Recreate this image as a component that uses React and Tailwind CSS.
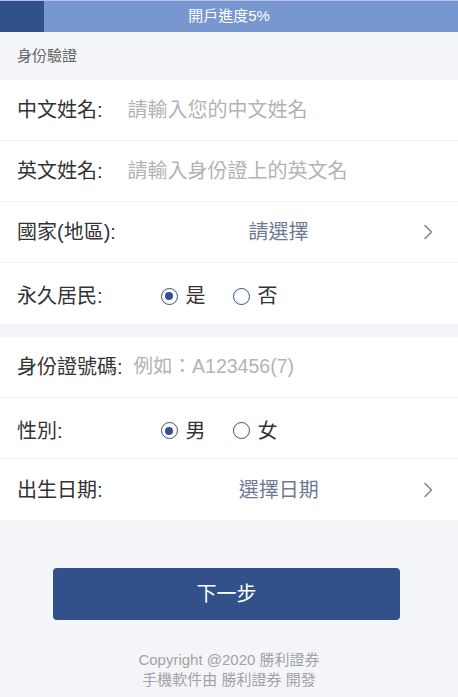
import React, { useState } from "react";

const font = {
  fontFamily: '"Liberation Sans", "Noto Sans CJK TC", "Noto Sans", sans-serif',
};

function Chevron() {
  return (
    <svg width="10" height="16" viewBox="0 0 10 16" fill="none">
      <path d="M2 1.5L8.5 8L2 14.5" stroke="#7a8499" strokeWidth="1.5" strokeLinecap="round" strokeLinejoin="round" />
    </svg>
  );
}

function Radio({ checked, label, onClick }) {
  return (
    <button onClick={onClick} className="flex items-center gap-[8px]">
      <span className="w-[17px] h-[17px] rounded-full border-[1.5px] border-[#32508a] flex items-center justify-center">
        {checked && <span className="w-[8px] h-[8px] rounded-full bg-[#32508a]" />}
      </span>
      <span className="text-[20px] text-[#333]">{label}</span>
    </button>
  );
}

function Row({ label, children, last, low }) {
  return (
    <div
      className={
        "h-[61px] flex items-center pl-[17px] pr-[25px] bg-white" +
        (last ? "" : " border-b border-[#eef0f4]") +
        (low ? " pt-[5px]" : "")
      }
    >
      <span className="text-[20px] text-[#333] shrink-0">{label}</span>
      {children}
    </div>
  );
}

export default function App() {
  const [resident, setResident] = useState("yes");
  const [gender, setGender] = useState("m");

  return (
    <div className="bg-[#f4f5f9] min-h-[697px] w-[458px]" style={font}>
      {/* progress */}
      <div className="relative h-[32px] bg-[#7896cf] border-t border-[#b3c3e3] flex items-center justify-center">
        <div className="absolute left-0 top-0 bottom-0 w-[44px] bg-[#32508a]" />
        <span className="relative text-white text-[15px]">開戶進度5%</span>
      </div>

      <div className="h-[48px] flex items-center pl-[17px] text-[15px] text-[#666]">身份驗證</div>

      <div>
        <Row label="中文姓名:">
          <span className="ml-[25px] text-[20px] text-[#b3b3b3]">請輸入您的中文姓名</span>
        </Row>
        <Row label="英文姓名:">
          <span className="ml-[25px] text-[20px] text-[#b3b3b3]">請輸入身份證上的英文名</span>
        </Row>
        <Row label="國家(地區):">
          <span className="flex-1 text-center text-[20px] text-[#6e7a94] pl-[18px]">請選擇</span>
          <Chevron />
        </Row>
        <Row label="永久居民:" last low>
          <div className="ml-[58px] flex items-center gap-[27px]">
            <Radio checked={resident === "yes"} label="是" onClick={() => setResident("yes")} />
            <Radio checked={resident === "no"} label="否" onClick={() => setResident("no")} />
          </div>
        </Row>
      </div>

      <div className="h-[13px]" />

      <div>
        <Row label="身份證號碼:">
          <span className="ml-[11px] text-[19.5px] text-[#b3b3b3]">例如：A123456(7)</span>
        </Row>
        <Row label="性別:" low>
          <div className="ml-[98px] flex items-center gap-[27px]">
            <Radio checked={gender === "m"} label="男" onClick={() => setGender("m")} />
            <Radio checked={gender === "f"} label="女" onClick={() => setGender("f")} />
          </div>
        </Row>
        <Row label="出生日期:" last>
          <span className="flex-1 text-center text-[20px] text-[#6e7a94] pl-[32px]">選擇日期</span>
          <Chevron />
        </Row>
      </div>

      <div className="pt-[48px]">
        <button className="ml-[53px] w-[347px] h-[52px] rounded-[4px] bg-[#32508a] text-white text-[20px]">
          下一步
        </button>
      </div>

      <div className="mt-[30px] text-center text-[15px] leading-[20px] text-[#a3a3a3]">
        <div>Copyright @2020 勝利證券</div>
        <div>手機軟件由 勝利證券 開發</div>
      </div>
    </div>
  );
}
